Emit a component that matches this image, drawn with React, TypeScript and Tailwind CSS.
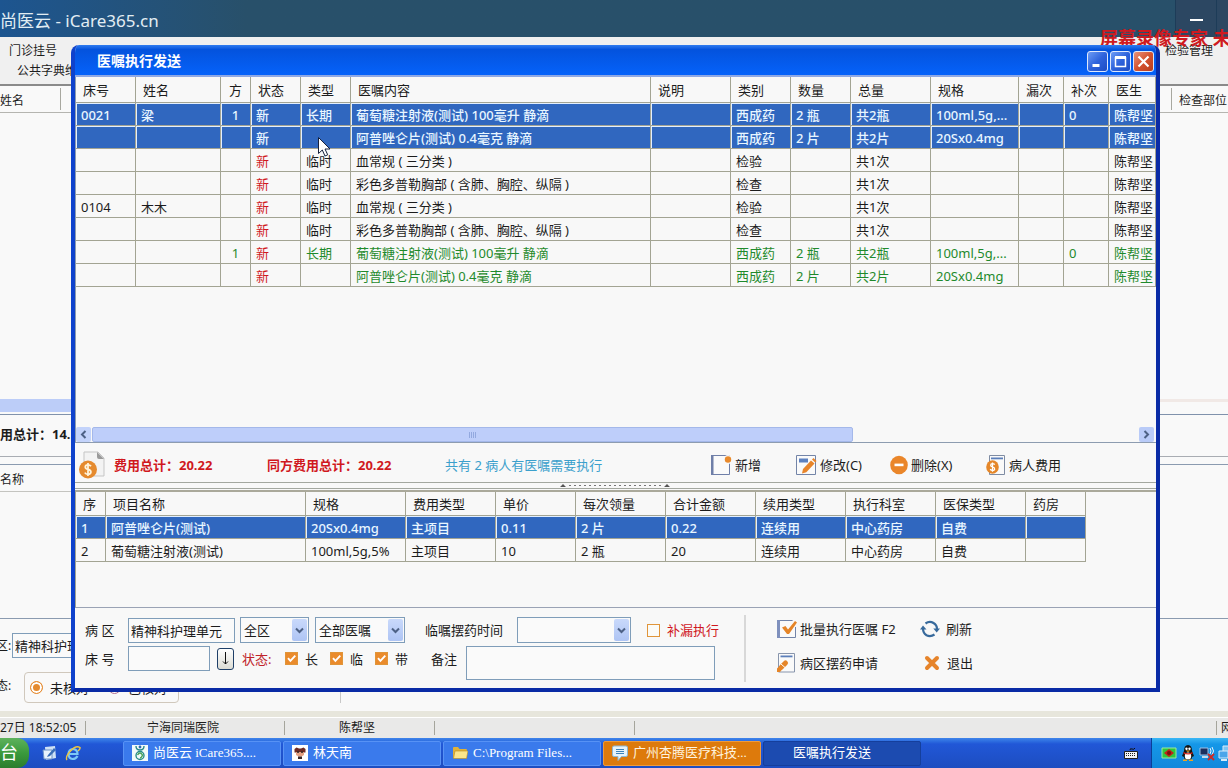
import type { ReactNode } from 'react';
import clsx from 'clsx';

const orderColumns = [
  { title: '床号', width: 'w-[60px]' },
  { title: '姓名', width: 'w-[85px]' },
  { title: '方', width: 'w-[30px]', center: true },
  { title: '状态', width: 'w-[50px]' },
  { title: '类型', width: 'w-[50px]' },
  { title: '医嘱内容', width: '' },
  { title: '说明', width: 'w-[80px]' },
  { title: '类别', width: 'w-[60px]' },
  { title: '数量', width: 'w-[60px]' },
  { title: '总量', width: 'w-[80px]' },
  { title: '规格', width: 'w-[88px]' },
  { title: '漏次', width: 'w-[45px]' },
  { title: '补次', width: 'w-[45px]' },
  { title: '医生', width: 'w-[47px]' },
];

const orders = [
  { tone: 'selected', cells: ['0021', '梁', '1', '新', '长期', '葡萄糖注射液(测试) 100毫升 静滴', '', '西成药', '2 瓶', '共2瓶', '100ml,5g,...', '', '0', '陈帮坚'] },
  { tone: 'selected', cells: ['', '', '', '新', '', '阿普唑仑片(测试) 0.4毫克 静滴', '', '西成药', '2 片', '共2片', '20Sx0.4mg', '', '', '陈帮坚'] },
  { tone: 'plain', cells: ['', '', '', '新', '临时', '血常规 ( 三分类 )', '', '检验', '', '共1次', '', '', '', '陈帮坚'] },
  { tone: 'plain', cells: ['', '', '', '新', '临时', '彩色多普勒胸部 ( 含肺、胸腔、纵隔 )', '', '检查', '', '共1次', '', '', '', '陈帮坚'] },
  { tone: 'plain', cells: ['0104', '木木', '', '新', '临时', '血常规 ( 三分类 )', '', '检验', '', '共1次', '', '', '', '陈帮坚'] },
  { tone: 'plain', cells: ['', '', '', '新', '临时', '彩色多普勒胸部 ( 含肺、胸腔、纵隔 )', '', '检查', '', '共1次', '', '', '', '陈帮坚'] },
  { tone: 'green', cells: ['', '', '1', '新', '长期', '葡萄糖注射液(测试) 100毫升 静滴', '', '西成药', '2 瓶', '共2瓶', '100ml,5g,...', '', '0', '陈帮坚'] },
  { tone: 'green', cells: ['', '', '', '新', '', '阿普唑仑片(测试) 0.4毫克 静滴', '', '西成药', '2 片', '共2片', '20Sx0.4mg', '', '', '陈帮坚'] },
];

const feeColumns = [
  { title: '序', width: 'w-[30px]' },
  { title: '项目名称', width: 'w-[200px]' },
  { title: '规格', width: 'w-[100px]' },
  { title: '费用类型', width: 'w-[90px]' },
  { title: '单价', width: 'w-[80px]' },
  { title: '每次领量', width: 'w-[90px]' },
  { title: '合计金额', width: 'w-[90px]' },
  { title: '续用类型', width: 'w-[90px]' },
  { title: '执行科室', width: 'w-[90px]' },
  { title: '医保类型', width: 'w-[90px]' },
  { title: '药房', width: 'w-[60px]' },
];

const fees = [
  { tone: 'selected', cells: ['1', '阿普唑仑片(测试)', '20Sx0.4mg', '主项目', '0.11', '2 片', '0.22', '连续用', '中心药房', '自费', ''] },
  { tone: 'plain', cells: ['2', '葡萄糖注射液(测试)', '100ml,5g,5%', '主项目', '10', '2 瓶', '20', '连续用', '中心药房', '自费', ''] },
];

type Column = { title: string; width: string; center?: boolean };
type Row = { tone: string; cells: string[] };

function Grid({ columns, rows, className, headClass }: { columns: Column[]; rows: Row[]; className: string; headClass: string }) {
  return (
    <table className={clsx('table-fixed border-separate border-spacing-0 text-left', className)}>
      <thead>
        <tr className={headClass}>
          {columns.map((col) => (
            <th
              key={col.title}
              className={clsx('overflow-hidden border-r border-b border-[#a3a493] p-0 font-normal whitespace-nowrap', col.width, col.center ? 'text-center' : 'pl-[7px]')}
            >
              {col.title}
            </th>
          ))}
        </tr>
      </thead>
      <tbody>
        {rows.map((row, r) => (
          <tr
            key={r}
            className={clsx(
              'h-[23px]',
              row.tone === 'selected' && 'bg-[#3067bf] font-medium text-[#e8f6ff]',
              row.tone === 'green' && 'text-[#1f8a2c]',
            )}
          >
            {row.cells.map((cell, c) => (
              <td
                key={c}
                className={clsx(
                  'overflow-hidden border-r border-b border-[#a3a493] p-0 pt-[2px] whitespace-nowrap',
                  columns[c].center ? 'text-center' : 'pl-[5px]',
                  row.tone === 'selected' && 'shadow-[inset_1px_1px_0_#e2efff]',
                  row.tone !== 'selected' && columns[c].title === '状态' && 'text-[#d0181e]',
                )}
              >
                {cell}
              </td>
            ))}
          </tr>
        ))}
      </tbody>
    </table>
  );
}

function Check({ label, checked, className }: { label: string; checked?: boolean; className?: string }) {
  return (
    <label className={clsx('flex items-center gap-[7px]', className)}>
      <span className="relative flex">
        <input
          type="checkbox"
          defaultChecked={checked}
          className="peer size-[13px] appearance-none border border-[#e0953a] bg-[#fbfbf8] checked:bg-[#ea8b2c]"
        />
        <svg viewBox="0 0 13 13" className="pointer-events-none absolute inset-0 hidden size-[13px] peer-checked:block">
          <path d="M3 6.2 5.4 8.8 10.3 3.6" fill="none" stroke="#fff" strokeWidth="1.9" />
        </svg>
      </span>
      {label}
    </label>
  );
}

function Select({ label, value, className }: { label: string; value: string; className: string }) {
  return (
    <span className={clsx('relative flex h-[26px]', className)}>
      <select aria-label={label} defaultValue={value} className="w-full appearance-none border border-[#7f9db9] bg-[#fafafa] pl-[3px] outline-none">
        <option>{value}</option>
      </select>
      <span className="pointer-events-none absolute top-[2px] right-[2px] flex h-[22px] w-[15px] items-center justify-center rounded-xs bg-linear-to-b from-[#c9d9fb] to-[#aec4f4]">
        <svg viewBox="0 0 9 7" className="h-[7px] w-[9px]">
          <path d="M1 1.5 4.5 5 8 1.5" fill="none" stroke="#4d6185" strokeWidth="2" />
        </svg>
      </span>
    </span>
  );
}

function ToolButton({ icon, children, className }: { icon: ReactNode; children: ReactNode; className?: string }) {
  return (
    <button type="button" className={clsx('flex items-center gap-[3px] whitespace-nowrap', className)}>
      {icon}
      {children}
    </button>
  );
}

const FeeIcon = () => (
  <svg viewBox="0 0 26 28" className="h-[28px] w-[26px]">
    <path d="M5 1h14l6 6v18H5z" fill="#f3f3f3" stroke="#c5c5c5" />
    <path d="M18 1l7 7h-5q-2 0-2-2z" fill="#9a9a9a" />
    <circle cx="9" cy="18.500" r="9" fill="#e58a2e" />
    <path d="M12 15.300Q11 13.800 9 13.800 6.300 13.800 6.300 15.900 6.300 17.700 9 18.400 11.900 19.100 11.900 21.100 11.900 23.300 9 23.300 6.800 23.300 5.800 21.600M9 12v13" fill="none" stroke="#fff3da" strokeWidth="1.800" />
  </svg>
);

const NewIcon = () => (
  <svg viewBox="0 0 22 22" className="size-[22px]">
    <path d="M1.500 1.500h18v19h-18z" fill="#fafafa" stroke="#6f7fa8" />
    <path d="M1 1h2.500v20H1z" fill="#6f7fa8" />
    <circle cx="18" cy="5.500" r="4.500" fill="#f8f8f8" />
    <circle cx="18" cy="5.500" r="3.200" fill="#e98a2c" />
  </svg>
);

const EditIcon = () => (
  <svg viewBox="0 0 22 22" className="size-[22px]">
    <path d="M1.500 1.500h19v19h-19z" fill="#fafafa" stroke="#7384a8" />
    <path d="M4 4.500h9v4H4z" fill="#5c81c0" />
    <path d="M7 19.500l1-4.500 8-8.500 3.500 3-8.200 8.700z" fill="#e8852a" />
    <path d="M17 5.500l1.500-1.500 3 3-1.300 1.600z" fill="#e8852a" />
  </svg>
);

const DeleteIcon = () => (
  <svg viewBox="0 0 18 20" className="h-[20px] w-[18px]">
    <ellipse cx="9" cy="10" rx="8.800" ry="9.300" fill="#ea862a" />
    <path d="M4.500 8.600h9v2.600h-9z" fill="#fff" />
  </svg>
);

const PatientFeeIcon = () => (
  <svg viewBox="0 0 20 22" className="h-[22px] w-[20px]">
    <path d="M3.500 1.500h15v19h-15z" fill="#fafafa" stroke="#7f8ca3" />
    <path d="M5 3.500h12v1.800H5z" fill="#5c7fba" />
    <ellipse cx="6.500" cy="13" rx="6.300" ry="6.700" fill="#e58729" />
    <path d="M8.700 10.700Q8 9.700 6.500 9.700 4.700 9.700 4.700 11.200 4.700 12.500 6.500 12.900 8.600 13.400 8.600 14.900 8.600 16.400 6.500 16.400 4.900 16.400 4.200 15.200M6.500 8.400v9.400" fill="none" stroke="#fff" strokeWidth="1.300" />
  </svg>
);

const BatchIcon = () => (
  <svg viewBox="0 0 20 20" className="size-[20px]">
    <path d="M.500 1.500h18v17H.500z" fill="#fafafa" stroke="#7384a8" />
    <path d="M0 1h3v18H0z" fill="#7f90bd" />
    <path d="M15.500 0H20v8h-4z" fill="#f8f8f8" />
    <path d="M5 8.500l3.500-1.500 2.500 3.500L18 2l2 1.500L12 15h-2z" fill="#e58528" />
  </svg>
);

const ApplyIcon = () => (
  <svg viewBox="0 0 20 20" className="size-[20px]">
    <path d="M1.500.500h16v18.500h-16z" fill="#fafafa" stroke="#8895ac" />
    <path d="M3.500 2.500h12v1.800h-12z" fill="#5c7fba" />
    <path d="M4.500 14l4-4" stroke="#e58528" strokeWidth="5" strokeLinecap="round" />
    <path d="M4 11l4 3.500" stroke="#fff" strokeWidth="1" />
    <path d="M0 19v-3.500L2.500 13l3 3L3 19z" fill="#e58528" />
  </svg>
);

const RefreshIcon = () => (
  <svg viewBox="0 0 20 18" className="h-[18px] w-[20px]">
    <g fill="none" stroke="#386a9c" strokeWidth="2.200">
      <path d="M5.500 3.500Q9.500.600 13.500 3 17 5 17 9" />
      <path d="M3 8.500Q3 13 6.500 15.200 10.500 17.200 14.500 14.500" />
    </g>
    <path d="M13.300 8.500h6.700l-3.300 4zM0 9.500h6.500L3 5.500z" fill="#386a9c" />
  </svg>
);

const ExitIcon = () => (
  <svg viewBox="0 0 16 16" className="size-[16px]">
    <path d="M3 3l10 10M13 3L3 13" stroke="#e6842b" strokeWidth="4" strokeLinecap="round" />
  </svg>
);

function Caption({ label, close, children }: { label: string; close?: boolean; children: ReactNode }) {
  return (
    <button
      type="button"
      aria-label={label}
      className={clsx(
        'flex size-[21px] items-center justify-center rounded-[3px] border border-[#dfe8fb]',
        close ? 'bg-linear-to-br from-[#e8927a] via-[#d5532f] to-[#b93d1c]' : 'bg-linear-to-br from-[#6d9bf5] via-[#2f63dc] to-[#1c4cc4]',
      )}
    >
      <svg viewBox="0 0 15 15" className="size-[15px]" fill="none" stroke="#fff">
        {children}
      </svg>
    </button>
  );
}

function OrderWindow() {
  return (
    <section className="absolute top-[45px] right-[68px] bottom-[76px] left-[71px] flex flex-col overflow-hidden rounded-t-lg border-x-4 border-b-4 border-[#0a2ba6] border-l-[#0f42cc] bg-[#f8f8f8]">
      <header className="-mx-1 flex h-[30px] shrink-0 items-center bg-linear-to-b from-[#2f7cf0] via-[#0453dd] via-15% to-[#0562fa] pt-[2px] pr-[6px] pl-[26px]">
        <h1 className="text-sm font-bold text-white">医嘱执行发送</h1>
        <div className="ml-auto flex gap-[2px]">
          <Caption label="最小化"><path d="M2.500 11.500h7" strokeWidth="3" /></Caption>
          <Caption label="最大化"><path d="M2.500 3v9.500h10V3" strokeWidth="1.500" /><path d="M2 3.500h11" strokeWidth="3" /></Caption>
          <Caption label="关闭" close><path d="M2.500 2.500l10 10M12.500 2.500l-10 10" strokeWidth="2.200" /></Caption>
        </div>
      </header>
      <div className="h-[2px] shrink-0 bg-[#8fa8e4]" />

      <div className="flex min-h-0 flex-1 flex-col border-b border-l border-[#8d9cb0]">
        <Grid columns={orderColumns} rows={orders} className="w-full" headClass="h-[26px]" />
        <div className="mt-auto flex h-[15px] shrink-0 items-center pr-[2px]">
          <button type="button" aria-label="向左滚动" className="flex size-[15px] items-center justify-center rounded-xs bg-[#c3d3fb]">
            <svg viewBox="0 0 7 9" className="h-[9px] w-[7px]"><path d="M5.500 1 2 4.500 5.500 8" fill="none" stroke="#4d6185" strokeWidth="2" /></svg>
          </button>
          <div className="flex flex-1 px-[1px]">
            <div className="flex h-[15px] w-8/11 items-center justify-center gap-px rounded-xs border border-[#a4b8ea] bg-[#becefa]">
              <i className="h-[6px] w-px bg-[#93a9df]" />
              <i className="h-[6px] w-px bg-[#93a9df]" />
              <i className="h-[6px] w-px bg-[#93a9df]" />
              <i className="h-[6px] w-px bg-[#93a9df]" />
            </div>
          </div>
          <button type="button" aria-label="向右滚动" className="flex size-[15px] items-center justify-center rounded-xs bg-[#b9cbf8]">
            <svg viewBox="0 0 7 9" className="h-[9px] w-[7px]"><path d="M1.500 1 5 4.500 1.500 8" fill="none" stroke="#4d6185" strokeWidth="2" /></svg>
          </button>
        </div>
      </div>

      <div className="flex h-[40px] shrink-0 items-center border-b border-[#a3a79f] pt-1 pl-1">
        <FeeIcon />
        <strong className="ml-[9px] w-[153px] text-[#d0181e]">费用总计：20.22</strong>
        <strong className="w-[178px] text-[#d0181e]">同方费用总计：20.22</strong>
        <span className="w-[265px] text-[#3ba0cc]">共有 2 病人有医嘱需要执行</span>
        <ToolButton icon={<NewIcon />} className="w-[85px]">新增</ToolButton>
        <ToolButton icon={<EditIcon />} className="w-[95px]">修改(C)</ToolButton>
        <ToolButton icon={<DeleteIcon />} className="w-[96px]">删除(X)</ToolButton>
        <ToolButton icon={<PatientFeeIcon />}>病人费用</ToolButton>
      </div>
      <div className="flex h-[6px] shrink-0 items-center justify-center border-b border-[#a3a79f]">
        <svg viewBox="0 0 112 5" className="h-[5px] w-[112px]">
          <path d="M0 4l3-3 3 3zM104 4l3-3 3 3z" fill="#555" />
          <path d="M9 2.500h93" stroke="#777" strokeDasharray="2 3" />
        </svg>
      </div>

      <div className="mt-px h-[118px] shrink-0 border-t-2 border-b border-l border-t-[#aaa99b] border-b-[#9aa3b5] border-l-[#a3a493]">
        <Grid columns={feeColumns} rows={fees} className="w-[1010px]" headClass="h-[24px]" />
      </div>

      <form className="flex h-[80px] shrink-0 pt-[7px] pl-[10px]">
        <div className="w-[659px]">
          <div className="flex h-[30px] items-center">
            <label htmlFor="ward" className="w-[43px]">病 区</label>
            <input id="ward" defaultValue="精神科护理单元" className="h-[25px] w-[107px] border border-[#7f9db9] bg-[#fafafa] pl-[2px]" />
            <Select label="区域" value="全区" className="ml-[5px] w-[69px]" />
            <Select label="医嘱范围" value="全部医嘱" className="ml-[6px] w-[90px]" />
            <span className="ml-[20px] w-[92px]">临嘱摆药时间</span>
            <Select label="临嘱摆药时间" value="" className="w-[114px]" />
            <Check label="补漏执行" className="ml-[16px] text-[#d0181e]" />
          </div>
          <div className="flex items-start pt-px">
            <div className="flex h-[25px] items-center">
              <label htmlFor="bed" className="w-[43px]">床 号</label>
              <input id="bed" className="h-[25px] w-[82px] border border-[#7f9db9] bg-[#fafafa] pl-[2px]" />
              <button type="button" aria-label="向下" className="ml-[7px] flex h-[22px] w-[17px] items-center justify-center rounded-[3px] border border-[#1f3f68] bg-linear-to-b from-white to-[#dcdcd4]">
                <svg viewBox="0 0 7 13" className="h-[13px] w-[7px]" fill="none" stroke="#111"><path d="M3.500 0v12M1 9.500l2.500 2.500L6 9.500" /></svg>
              </button>
              <span className="ml-[8px] w-[43px] text-[#c0242a]">状态:</span>
              <Check label="长" checked className="w-[45px]" />
              <Check label="临" checked className="w-[45px]" />
              <Check label="带" checked className="w-[56px]" />
              <label htmlFor="memo" className="w-[35px]">备注</label>
            </div>
            <textarea id="memo" className="h-[34px] w-[249px] resize-none border border-[#7f9db9] bg-[#fafafa]" />
          </div>
        </div>
        <div className="h-[67px] w-[2px] bg-[#d8d8d8]" />
        <div className="-mt-[3px] ml-[31px] grid auto-rows-[34px] grid-cols-[143px_auto] content-start">
          <ToolButton icon={<BatchIcon />}>批量执行医嘱 F2</ToolButton>
          <ToolButton icon={<RefreshIcon />}><span className="pl-[3px]">刷新</span></ToolButton>
          <ToolButton icon={<ApplyIcon />} className="gap-0">病区摆药申请</ToolButton>
          <ToolButton icon={<ExitIcon />} className="pl-1"><span className="pl-[4px]">退出</span></ToolButton>
        </div>
      </form>
    </section>
  );
}

function MainWindow() {
  return (
    <>
      <header className="flex h-[37px] shrink-0 items-center bg-linear-to-r from-[#1d5590] via-[#28506a] via-20% to-[#28506a]">
        <span className="pt-1 text-[17px] text-[#e2edf3]">尚医云 - iCare365.cn</span>
        <button type="button" aria-label="最小化主窗口" className="ml-auto flex h-full w-[42px] items-center justify-center border-x border-[#1d3c58] bg-[#2c4762]">
          <i className="mt-[3px] h-[2px] w-[13px] bg-white" />
        </button>
        <div className="h-full w-[11px] bg-[#2c4762]" />
      </header>
      <nav className="flex h-[47px] shrink-0 justify-between bg-[#f0f0f0] pt-1 text-xs leading-5">
        <div className="pl-[9px]">
          <a href="#register" className="block">门诊挂号</a>
          <a href="#dictionary" className="block pl-2">公共字典维护</a>
        </div>
        <a href="#lab" className="w-[63px]">检验管理</a>
      </nav>
      <main className="flex min-h-0 flex-1 flex-col border-t-2 border-[#8a8a8a] bg-[#f9f9f9]">
        <div className="flex h-[27px] shrink-0 items-center justify-between border-b border-[#b5b5b0]">
          <span className="flex h-[22px] w-[61px] items-center border-r border-[#a8a8a0] pt-1 text-xs">姓名</span>
          <span className="flex h-[22px] w-[57px] items-center overflow-hidden border-l border-[#a8a8a0] pt-1 pl-[7px] text-xs whitespace-nowrap">检查部位</span>
        </div>
        <div className="flex flex-1 flex-col justify-end border-b border-[#8092ac] pb-[2px]">
          <div className="flex h-[13px] justify-between">
            <div className="w-1/3 bg-[#bccdf8]" />
            <div className="h-[3px] w-1/5 bg-[#f1e9e6]" />
          </div>
        </div>
        <div className="flex h-[42px] shrink-0 items-center border-b border-[#a9adb3] text-[13px]">
          <strong className="pb-[4px]">用总计：14.</strong>
        </div>
        <div className="h-[8px] shrink-0 border-b border-[#8b9bb0]" />
        <div className="h-[27px] shrink-0 text-xs">
          <div className="flex h-full w-1/2 items-center border-b border-[#c4c4c0] pt-1">名称</div>
        </div>
        <div className="h-[127px] shrink-0 border-b border-[#8b9bb0]" />
        <div className="h-[92px] shrink-0 pt-[14px]">
          <div className="flex items-center">
            <label htmlFor="mainWard" className="-ml-1 w-4 text-xs whitespace-nowrap">区:</label>
            <input id="mainWard" defaultValue="精神科护理单元" className="h-[25px] w-[107px] border border-[#7f9db9] bg-[#fafafa] pl-[2px]" />
          </div>
          <div className="flex pt-[14px]">
            <span className="-ml-1 w-7 pt-[6px] text-xs">态:</span>
            <div className="flex h-[31px] w-[155px] items-center rounded border border-[#d0c8bc] pl-[5px]">
              <label className="flex w-[78px] items-center gap-[7px]">
                <input type="radio" name="audit" defaultChecked className="size-[13px] appearance-none rounded-full border border-[#e58a2e] bg-[#e58a2e] shadow-[inset_0_0_0_2px_#fff]" />
                未核对
              </label>
              <label className="flex items-center gap-[7px]">
                <input type="radio" name="audit" className="size-[13px] appearance-none rounded-full border border-[#b07090] bg-white" />
                已核对
              </label>
            </div>
            <div className="ml-[161px] h-[31px] w-px bg-[#c8c8c8]" />
          </div>
        </div>
      </main>
      <div className="h-[7px] shrink-0 border-b border-white bg-[#e7e6dc]" />
      <footer className="flex h-[20px] shrink-0 items-center bg-[#e9e9e8] text-xs">
        <span className="w-[86px] border-r border-[#a5a59c] leading-[14px] whitespace-nowrap">27日 18:52:05</span>
        <span className="w-[199px] border-r border-[#a5a59c] pl-[61px] leading-[14px]">宁海同瑞医院</span>
        <span className="w-[150px] border-r border-[#a5a59c] pl-[54px] leading-[14px]">陈帮坚</span>
        <span className="h-[14px] w-[200px] border-r border-[#a5a59c]" />
        <span className="ml-auto w-[12px] overflow-hidden border-l border-[#a5a59c] pl-[4px] leading-[14px]">网</span>
      </footer>
    </>
  );
}

const tasks = [
  {
    title: '尚医云 iCare365....',
    icon: (
      <svg viewBox="0 0 16 16" className="size-[16px]">
        <path d="M0 0h16v16H0z" fill="#f2fafa" />
        <g fill="none" stroke="#2a8c8a" strokeWidth="1.400">
          <path d="M4 1q0 4 4 4t4-4" />
          <circle cx="8" cy="10.500" r="4" />
          <path d="M5.500 10q2.500-4 5 0-1 3-2.500 3" stroke="#4aa35a" />
        </g>
        <circle cx="8" cy="2" r="1.400" fill="#2d6bb0" />
      </svg>
    ),
  },
  {
    title: '林天南',
    icon: (
      <svg viewBox="0 0 16 16" className="size-[16px]">
        <path d="M0 0h16v16H0z" fill="#fff" />
        <path d="M2.500 4l2-1.500L7 3.500h2l2.500-1 2 1.500v3.500h-11z" fill="#6e2a25" />
        <path d="M4 7h8v3q-4 3-8 0z" fill="#e4a184" />
        <path d="M5 6.500h2v1.300H5zM9 6.500h2v1.300H9z" fill="#222" />
        <path d="M6 11.500h4V14H6z" fill="#3a2424" />
      </svg>
    ),
  },
  {
    title: 'C:\\Program Files...',
    icon: (
      <svg viewBox="0 0 16 16" className="size-[16px]">
        <path d="M1 3q0-1 1-1h4l1.500 2H14q1 0 1 1v8H1z" fill="#e0b23a" />
        <path d="M1.500 13.500 3 6h13l-1.500 7.500z" fill="#fbe58b" stroke="#b98a20" strokeWidth=".600" />
      </svg>
    ),
  },
  {
    title: '广州杏腾医疗科技...',
    alert: true,
    icon: (
      <svg viewBox="0 0 16 16" className="size-[16px]">
        <path d="M2 1h12q1.500 0 1.500 1.500V10q0 1.500-1.500 1.500H9.500L6 15.500v-4H2Q.500 11.500.500 10V2.500Q.500 1 2 1z" fill="#e6f3fb" stroke="#8db8d4" />
        <path d="M4 4.500h8M4 6.500h8M4 8.500h8" stroke="#3b83bb" />
      </svg>
    ),
  },
  { title: '医嘱执行发送', active: true, icon: <span className="w-[10px]" /> },
];

function Taskbar() {
  return (
    <footer className="flex h-[30px] shrink-0 items-center bg-linear-to-b from-[#3f85ea] via-[#2157d7] via-20% to-[#1d4dc0] font-['Liberation_Serif','Noto_Sans_CJK_SC',serif] text-white">
      <button type="button" className="h-full w-[29px] overflow-hidden rounded-r-xl bg-linear-to-b from-[#5eb25c] via-[#3a9a3c] to-[#2b7d2d] pr-4 text-lg leading-7 whitespace-nowrap">台</button>
      <a href="#desktop" aria-label="显示桌面" className="ml-[13px]">
        <svg viewBox="0 0 16 16" className="size-[16px]">
          <path d="M3 2l10-1 1 12-10 2z" fill="#cfe2f5" />
          <path d="M1 5h9v9H2z" fill="#e9f4fd" stroke="#6c93c8" />
          <path d="M6 10l6-7 2 2-6 6-3 1z" fill="#3a6fb8" />
        </svg>
      </a>
      <a href="#browser" aria-label="浏览器" className="mr-[42px] ml-[7px]">
        <svg viewBox="0 0 16 16" className="size-[16px]" fill="none">
          <path d="M12.500 11q-1.500 3-5 3-4-.500-4-5T8 4q4.500.500 4.500 5h-8" stroke="#7cc8f6" strokeWidth="2.200" />
          <path d="M2 15Q0 12 5.500 6T15 2.500q.500 1.500-2 3.500" stroke="#f0c53e" strokeWidth="1.400" />
        </svg>
      </a>
      <div className="flex h-[25px] min-w-0 gap-[2px]">
        {tasks.map((task) => (
          <button
            key={task.title}
            type="button"
            className={clsx(
              'flex w-[158px] items-center gap-[5px] overflow-hidden rounded-xs border text-[13px] whitespace-nowrap',
              task.alert && 'border-[#ef9a3a] bg-[#dd7a0c] pl-[8px] text-[#fff3df]',
              task.active && 'border-[#153f9c] bg-[#1c4bb0] pl-[14px]',
              !task.alert && !task.active && 'border-[#5792f5] bg-[#3a7aec] pl-[8px]',
            )}
          >
            {task.icon}
            {task.title}
          </button>
        ))}
      </div>
      <svg viewBox="0 0 14 12" className="mr-[13px] ml-auto h-[12px] w-[14px]">
        <path d="M6 3q0-2 2-1t3-1" stroke="#111" fill="none" />
        <path d="M.500 4.500h13v7H.500z" fill="#f4f4f4" stroke="#222" />
        <path d="M2 6.500h10M2 8.500h10" stroke="#222" strokeDasharray="1 1" />
      </svg>
      <div className="flex h-full w-[77px] items-center gap-[3px] overflow-hidden border-l border-[#0b3f98] bg-linear-to-b from-[#3ab7f5] via-[#1597e8] via-20% to-[#1288dc] pl-[9px]">
        <svg viewBox="0 0 16 16" className="size-[16px] shrink-0">
          <path d="M1 3h14v10H1z" fill="#2fc63e" stroke="#9be89f" />
          <path d="M3 8l5-4 5 4-5 4z" fill="#c32419" />
          <circle cx="8" cy="8" r="2" fill="#7a120c" />
        </svg>
        <svg viewBox="0 0 16 16" className="size-[16px] shrink-0">
          <path d="M4 6q0-6 4-6t4 6l2 5-2 1q0 3-4 3t-4-3l-2-1z" fill="#151515" />
          <ellipse cx="8" cy="11" rx="3.200" ry="3.500" fill="#fff" />
          <circle cx="6.500" cy="3.800" r="1.200" fill="#fff" />
          <circle cx="9.500" cy="3.800" r="1.200" fill="#fff" />
          <path d="M3.500 7q4.500 2.500 9 0v1.500q-4.500 2-9 0z" fill="#d8281c" />
          <path d="M5.500 5.500h5L8 7zM3 14.500h4v1.500H3zM9 14.500h4v1.500H9z" fill="#f2a51e" />
        </svg>
        <svg viewBox="0 0 16 16" className="size-[16px] shrink-0">
          <path d="M1 3h8v7H1z" fill="#1d2f5e" stroke="#9cc1e8" />
          <path d="M3 12h6" stroke="#c8d8ea" strokeWidth="2" />
          <path d="M11 3q2 3 0 6M13 2q3 4 0 8" stroke="#e8f4fd" fill="none" />
          <path d="M9 9l6 6M15 9l-6 6" stroke="#cf2a24" strokeWidth="1.800" />
        </svg>
        <svg viewBox="0 0 16 16" className="size-[16px] shrink-0">
          <path d="M5 1h9v7H5z" fill="#7cc5f4" stroke="#d6ebfa" />
          <path d="M1 6h9v7H1z" fill="#4aa5ea" stroke="#d6ebfa" />
          <path d="M3 15h6" stroke="#d6ebfa" strokeWidth="2" />
        </svg>
      </div>
    </footer>
  );
}

export default function App() {
  return (
    <div className="relative flex h-screen flex-col overflow-hidden bg-[#f9f9f9] font-['Noto_Sans','Noto_Sans_CJK_SC',sans-serif] text-[13px] leading-[18px] text-[#1c1c1c]">
      <MainWindow />
      <Taskbar />
      <div className="absolute top-[28px] right-0 w-[128px] overflow-hidden text-lg leading-5 font-bold whitespace-nowrap text-[#cf1a20]">屏幕录像专家 未</div>
      <OrderWindow />
      <svg viewBox="0 0 13 20" className="pointer-events-none absolute top-[137px] left-[318px] h-[20px] w-[13px]">
        <path d="M.500.500v16l3.800-3.500 2.700 6 2.700-1.200L7 12h5z" fill="#fff" stroke="#16213c" />
      </svg>
    </div>
  );
}
